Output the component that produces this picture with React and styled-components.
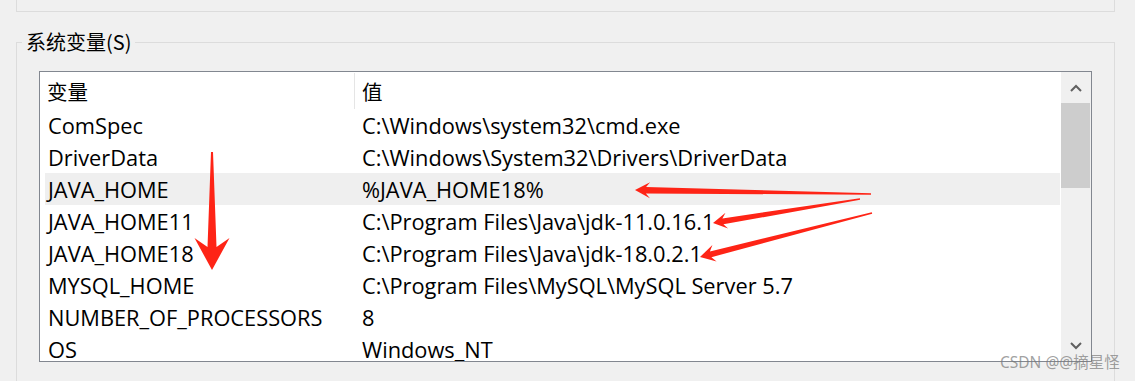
import React from "react";
import styled, { createGlobalStyle } from "styled-components";

const Global = createGlobalStyle`
  html, body { margin: 0; padding: 0; }
  body {
    background: #f0f0f0;
    width: 1135px;
    height: 381px;
    overflow: hidden;
    font-family: "Open Sans", "Noto Sans CJK SC", sans-serif;
  }
`;

const Page = styled.div`
  position: relative;
  width: 1135px;
  height: 381px;
  overflow: hidden;
  background: #f0f0f0;
`;

const TopGroup = styled.div`
  height: 11px;
  margin: 0 20px 0 16px;
  border: 1px solid #dcdcdc;
  border-top: none;
`;

const Group = styled.fieldset`
  margin: 18px 20px 0 16px;
  padding: 17px 22px 40px 22px;
  border: 1px solid #dcdcdc;
  min-width: 0;
`;

const Legend = styled.legend`
  margin-left: -17px;
  padding: 0 4px;
  font-family: "Noto Sans CJK SC", sans-serif;
  font-size: 20px;
  line-height: 24px;
  color: #000;
`;

const ListBox = styled.div`
  display: flex;
  height: 289px;
  border: 1px solid #828790;
  background: #fff;
  overflow: hidden;
`;

const ListArea = styled.div`
  flex: 1;
  padding-left: 5px;
  overflow: hidden;
  border-right: 1px solid #fff;
`;

const cols = `310px 1fr`;

const Header = styled.div`
  display: grid;
  grid-template-columns: ${cols};
  height: 37px;
  margin-left: -5px;
  padding-left: 5px;
  border-right: 1px solid #e5e5e5;
  margin-right: -1px;
`;

const HeadCell = styled.div`
  display: flex;
  align-items: center;
  padding-left: ${(p) => p.$pad}px;
  font-family: "Noto Sans CJK SC", sans-serif;
  font-size: 20.5px;
  color: #000;
  border-right: ${(p) => (p.$divider ? "1px solid #e5e5e5" : "none")};
  margin: 1px 0 0 0;
`;

const Row = styled.div`
  display: grid;
  grid-template-columns: ${cols};
  height: 32px;
  background: ${(p) => (p.$hot ? "#efefef" : "transparent")};
`;

const Cell = styled.div`
  display: flex;
  align-items: center;
  padding-left: ${(p) => p.$pad}px;
  padding-top: 1px;
  font-size: 21.8px;
  color: #000;
  white-space: nowrap;
`;

const ScrollBar = styled.div`
  width: 30px;
  background: #f0f0f0;
  display: flex;
  flex-direction: column;
`;

const ScrollBtn = styled.div`
  height: 31px;
  display: flex;
  align-items: center;
  justify-content: center;
  padding-right: 1px;
`;

const Thumb = styled.div`
  height: 85px;
  margin-right: 1px;
  background: #cdcdcd;
`;

const Track = styled.div`
  flex: 1;
`;

const Watermark = styled.div`
  position: absolute;
  left: 1000px;
  top: 351px;
  font-family: "Noto Sans", "Noto Sans CJK SC", sans-serif;
  font-size: 15.5px;
  line-height: 22px;
  color: rgba(120, 120, 120, 0.7);
  white-space: nowrap;
`;

const Overlay = styled.svg`
  position: absolute;
  left: 0;
  top: 0;
  pointer-events: none;
`;

const rows = [
  ["ComSpec", "C:\\Windows\\system32\\cmd.exe"],
  ["DriverData", "C:\\Windows\\System32\\Drivers\\DriverData"],
  ["JAVA_HOME", "%JAVA_HOME18%", true],
  ["JAVA_HOME11", "C:\\Program Files\\Java\\jdk-11.0.16.1"],
  ["JAVA_HOME18", "C:\\Program Files\\Java\\jdk-18.0.2.1"],
  ["MYSQL_HOME", "C:\\Program Files\\MySQL\\MySQL Server 5.7"],
  ["NUMBER_OF_PROCESSORS", "8"],
  ["OS", "Windows_NT"],
];

function arrowPoints(tail, tip, headLen, hw, nw, tw, notch) {
  const dx = tip[0] - tail[0];
  const dy = tip[1] - tail[1];
  const len = Math.hypot(dx, dy);
  const ux = dx / len, uy = dy / len;
  const nx = -uy, ny = ux;
  const p = (bx, by, a, b) => [bx + ux * a + nx * b, by + uy * a + ny * b];
  const pts = [
    p(tail[0], tail[1], 0, tw),
    p(tip[0], tip[1], -(headLen - notch), nw),
    p(tip[0], tip[1], -headLen, hw),
    tip,
    p(tip[0], tip[1], -headLen, -hw),
    p(tip[0], tip[1], -(headLen - notch), -nw),
    p(tail[0], tail[1], 0, -tw),
  ];
  return pts.map((q) => q[0].toFixed(1) + "," + q[1].toFixed(1)).join(" ");
}

const arrows = [
  { tail: [212, 152], tip: [212, 270], headLen: 32, hw: 17.5, nw: 4.5, tw: 1, notch: 9 },
  { tail: [871, 194], tip: [635, 190], headLen: 15, hw: 8, nw: 3.2, tw: 0.8, notch: 4 },
  { tail: [860, 199], tip: [713, 223], headLen: 14, hw: 8, nw: 3, tw: 0.8, notch: 4 },
  { tail: [872, 213], tip: [700, 257], headLen: 15, hw: 8.5, nw: 3, tw: 0.8, notch: 4 },
];

const Chevron = ({ down }) => (
  <svg width="12" height="8" viewBox="0 0 12 8">
    <path
      d={down ? "M1 1 L6 6 L11 1" : "M1 7 L6 2 L11 7"}
      fill="none"
      stroke="#606060"
      strokeWidth="2"
    />
  </svg>
);

export default function App() {
  return (
    <Page>
      <Global />
      <TopGroup />
      <Group>
        <Legend>系统变量(S)</Legend>
        <ListBox>
          <ListArea>
            <Header>
              <HeadCell $pad={2} $divider>变量</HeadCell>
              <HeadCell $pad={7}>值</HeadCell>
            </Header>
            {rows.map(([k, v, hot]) => (
              <Row key={k} $hot={hot}>
                <Cell $pad={3}>{k}</Cell>
                <Cell $pad={7}>{v}</Cell>
              </Row>
            ))}
          </ListArea>
          <ScrollBar>
            <ScrollBtn>
              <Chevron />
            </ScrollBtn>
            <Thumb />
            <Track />
            <ScrollBtn>
              <Chevron down />
            </ScrollBtn>
          </ScrollBar>
        </ListBox>
      </Group>
      <Overlay width="1135" height="381" viewBox="0 0 1135 381">
        {arrows.map((a, i) => (
          <polygon
            key={i}
            points={arrowPoints(a.tail, a.tip, a.headLen, a.hw, a.nw, a.tw, a.notch)}
            fill="#fe2416"
          />
        ))}
      </Overlay>
      <Watermark>CSDN @@摘星怪</Watermark>
    </Page>
  );
}
